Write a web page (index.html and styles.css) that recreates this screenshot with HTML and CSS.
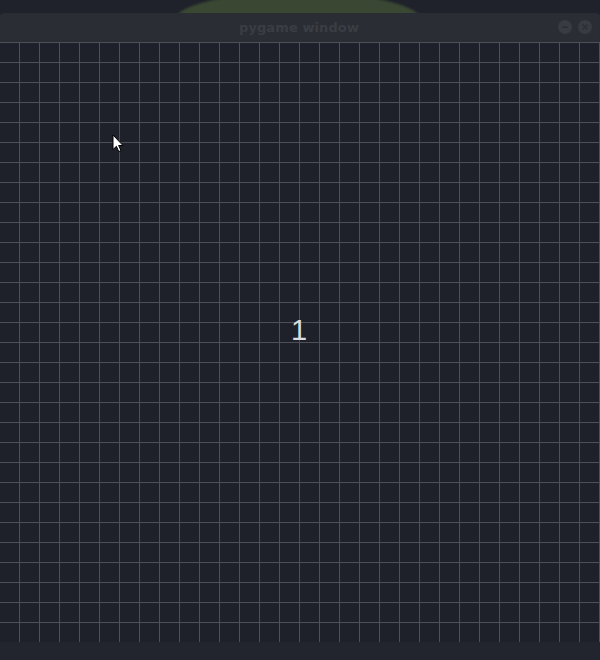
FILE: index.html
```html
<!DOCTYPE html>
<html>
<head>
<meta charset="utf-8">
<link rel="stylesheet" href="styles.css">
</head>
<body>
<div class="desktop">
  <div class="behind"></div>
  <div class="window">
    <div class="titlebar">
      <span class="title">pygame window</span>
      <div class="controls">
        <span class="btn">
          <svg width="14" height="14" viewBox="0 0 14 14"><circle cx="7" cy="7" r="7" fill="#383b42"/><rect x="4" y="6.5" width="6" height="1.4" fill="#2b2e35"/></svg>
        </span>
        <span class="btn">
          <svg width="14" height="14" viewBox="0 0 14 14"><circle cx="7" cy="7" r="7" fill="#383b42"/><path d="M4.5 4.5 L9.5 9.5 M9.5 4.5 L4.5 9.5" stroke="#2b2e35" stroke-width="1.4"/></svg>
        </span>
      </div>
    </div>
    <div class="canvas">
      <span class="count">1</span>
      <svg class="cursor" width="12" height="19" viewBox="0 0 12 19"><path d="M1 1 L1 15.5 L4.4 12.3 L6.8 17.6 L9 16.6 L6.6 11.5 L11 11.5 Z" fill="#ffffff" stroke="#000000" stroke-width="1" stroke-linejoin="round"/></svg>
    </div>
  </div>
  <div class="footer"></div>
</div>
</body>
</html>
```
FILE: styles.css
```css
html, body {
  margin: 0;
  padding: 0;
  background: #1f222a;
  width: 600px;
  height: 660px;
  overflow: hidden;
}
.desktop {
  position: relative;
  width: 600px;
  height: 660px;
  padding-top: 13px;
  box-sizing: border-box;
  display: flex;
  flex-direction: column;
}
.behind {
  position: absolute;
  left: 173px;
  top: -8px;
  width: 250px;
  height: 60px;
  border-radius: 50%;
  background: #3a4733;
  filter: blur(1px);
}
.window {
  position: relative;
  display: flex;
  flex-direction: column;
}
.titlebar {
  height: 29px;
  background: #2a2d34;
  border-radius: 4px 4px 0 0;
  display: flex;
  align-items: center;
  justify-content: center;
  position: relative;
}
.title {
  font-family: "DejaVu Sans", sans-serif;
  font-weight: bold;
  font-size: 13px;
  color: #3a3d44;
  letter-spacing: 0.1px;
  margin-left: -2px;
}
.controls {
  position: absolute;
  right: 8px;
  top: 7px;
  display: flex;
  gap: 6px;
}
.btn {
  display: block;
  width: 14px;
  height: 14px;
}
.btn svg { display: block; }
.canvas {
  position: relative;
  width: 600px;
  height: 600px;
  background-color: #1e212a;
  background-image:
    linear-gradient(to bottom, #4d5059 1px, transparent 1px),
    linear-gradient(to right, #4d5059 1px, transparent 1px);
  background-size: 20px 20px, 20px 20px;
  background-position: 0 0, 19px 0;
}
.count {
  position: absolute;
  left: 291px;
  top: 274px;
  font-family: "Liberation Sans", sans-serif;
  font-size: 29px;
  color: #d9dbdd;
  line-height: 1;
}
.cursor {
  position: absolute;
  left: 112px;
  top: 92px;
}
.footer {
  flex: 1;
  background: #22252d;
}
```
